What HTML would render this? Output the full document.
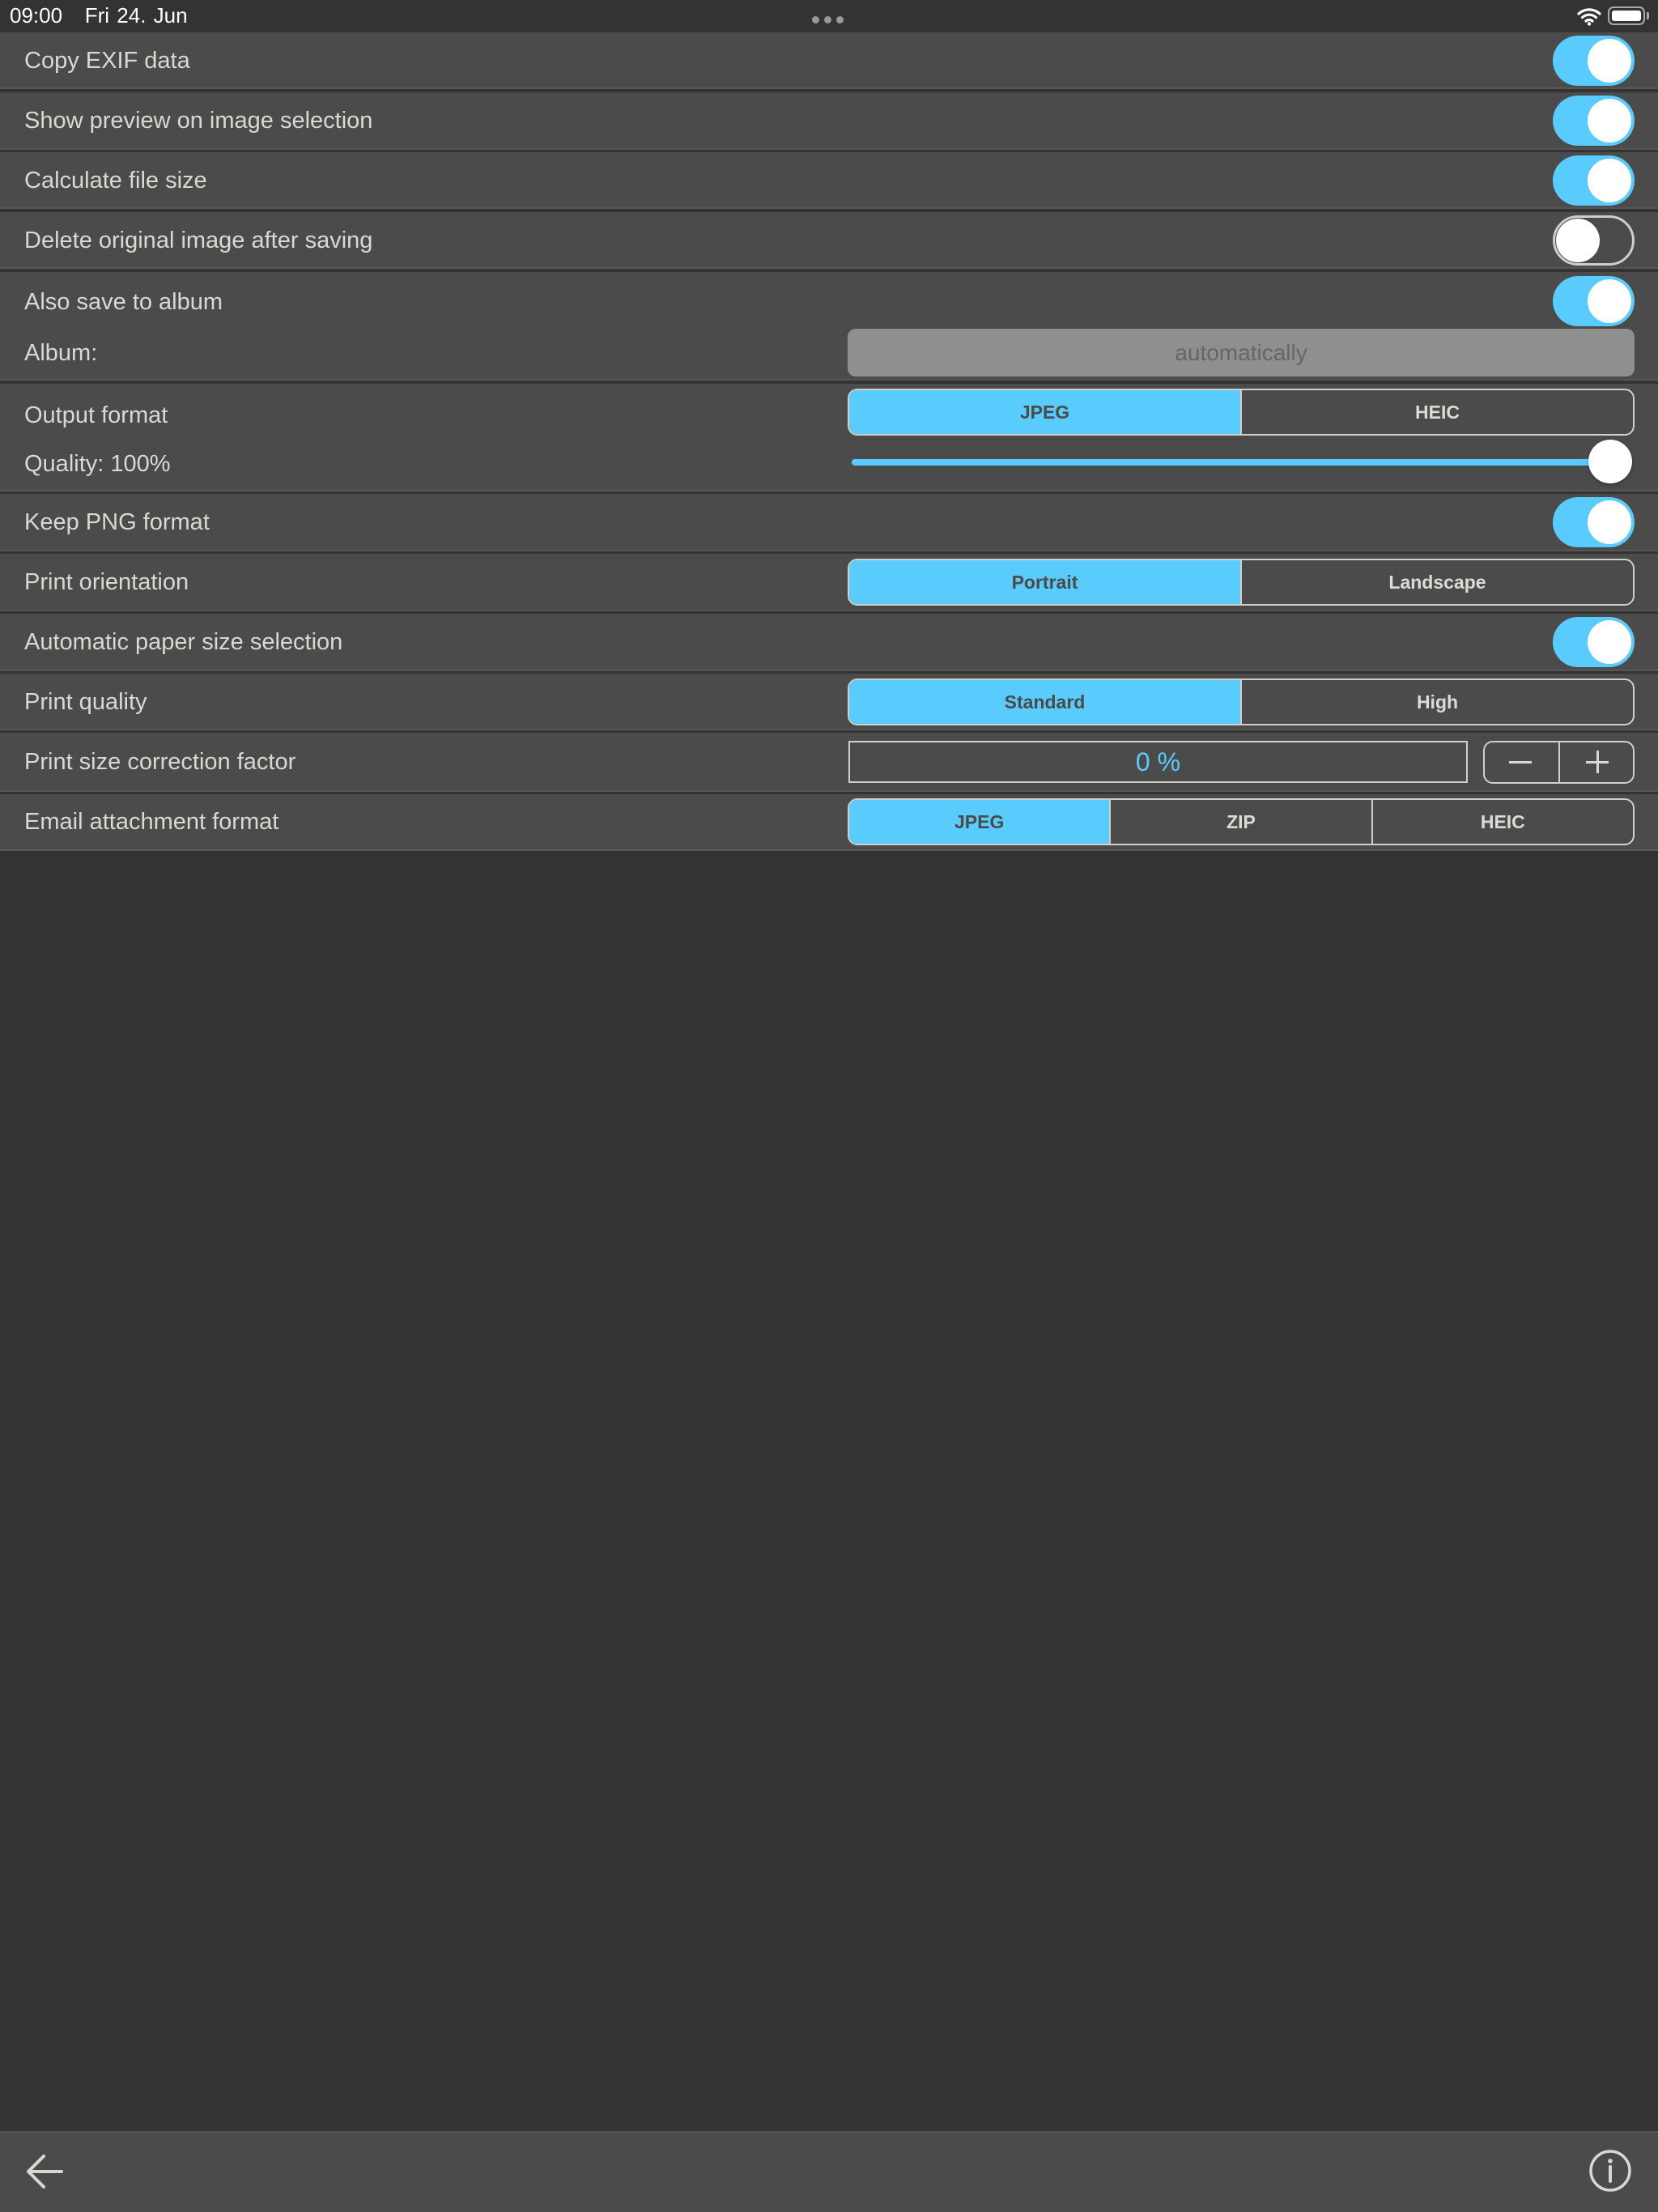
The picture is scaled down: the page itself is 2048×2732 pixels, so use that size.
<!DOCTYPE html>
<html><head><meta charset="utf-8"><style>
*{margin:0;padding:0;box-sizing:border-box}
body{width:2048px;height:2732px;background:#333333;position:relative;overflow:hidden;font-family:"Liberation Sans",sans-serif}
.a{position:absolute}
.row{position:absolute;left:0;width:2048px;background:#4b4b4b;border-bottom:2px solid #565656}
.lbl{position:absolute;left:30px;font-size:29px;color:#d9d9d2;line-height:32px;transform:translateY(-16px)}
.tg{position:absolute;left:1918px;width:101px;height:62px;border-radius:31px;background:#5acbfd}
.tg::after{content:"";position:absolute;right:4px;top:4px;width:54px;height:54px;border-radius:50%;background:#fff}
.tg.off{background:#4b4b4b;border:3px solid #cfcfc8}
.tg.off::after{left:1px;right:auto;top:1px}
.seg{position:absolute;left:1047px;width:972px;height:58px;border:2px solid #d0d0c8;border-radius:12px;overflow:hidden;display:flex}
.seg div{flex:1;display:flex;align-items:center;justify-content:center;font-size:23px;font-weight:bold;color:#dcdcd6}
.seg div+div{border-left:2px solid #d0d0c8}
.seg .on{background:#5acbfd;color:#4a4a4a}
</style></head><body>
<div class="a" style="left:12px;top:4px;font-size:26px;color:#fff;line-height:30px;word-spacing:2px">09:00&nbsp;&nbsp;&nbsp;Fri 24. Jun</div>
<div class="a" style="left:1003px;top:20px;width:9px;height:9px;border-radius:50%;background:#999;box-shadow:15px 0 #999,30px 0 #999"></div>
<svg class="a" style="left:1948px;top:8px" width="30" height="24" viewBox="0 0 30 24"><path d="M2 9a19 19 0 0 1 26 0M6.5 13.5a12.5 12.5 0 0 1 17 0M11 18a6 6 0 0 1 8 0" stroke="#fff" stroke-width="3.2" fill="none" stroke-linecap="round"/><circle cx="15" cy="21.5" r="2.2" fill="#fff"/></svg>
<div class="a" style="left:1986px;top:8px;width:46px;height:23px;border:2px solid #aaa;border-radius:7px;padding:3px"><div style="width:100%;height:100%;background:#fff;border-radius:3px"></div></div>
<div class="a" style="left:2034px;top:15px;width:3px;height:9px;background:#aaa;border-radius:0 2px 2px 0"></div>

<div class="row" style="top:40px;height:70px"></div>
<div class="row" style="top:114px;height:71px"></div>
<div class="row" style="top:188px;height:70px"></div>
<div class="row" style="top:262px;height:70px"></div>
<div class="row" style="top:336px;height:134px"></div>
<div class="row" style="top:474px;height:133px"></div>
<div class="row" style="top:610px;height:71px"></div>
<div class="row" style="top:684px;height:71px"></div>
<div class="row" style="top:758px;height:71px"></div>
<div class="row" style="top:832px;height:70px"></div>
<div class="row" style="top:905px;height:73px"></div>
<div class="row" style="top:981px;height:70px"></div>

<div class="lbl" style="top:75px">Copy EXIF data</div>
<div class="lbl" style="top:149px">Show preview on image selection</div>
<div class="lbl" style="top:223px">Calculate file size</div>
<div class="lbl" style="top:297px">Delete original image after saving</div>
<div class="lbl" style="top:373px">Also save to album</div>
<div class="lbl" style="top:436px">Album:</div>
<div class="lbl" style="top:513px">Output format</div>
<div class="lbl" style="top:573px">Quality: 100%</div>
<div class="lbl" style="top:645px">Keep PNG format</div>
<div class="lbl" style="top:719px">Print orientation</div>
<div class="lbl" style="top:793px">Automatic paper size selection</div>
<div class="lbl" style="top:867px">Print quality</div>
<div class="lbl" style="top:941px">Print size correction factor</div>
<div class="lbl" style="top:1015px">Email attachment format</div>

<div class="tg" style="top:44px"></div>
<div class="tg" style="top:118px"></div>
<div class="tg" style="top:192px"></div>
<div class="tg off" style="top:266px"></div>
<div class="tg" style="top:341px"></div>
<div class="tg" style="top:614px"></div>
<div class="tg" style="top:762px"></div>

<div class="a" style="left:1047px;top:406px;width:972px;height:59px;background:#8f8f8f;border-radius:10px;font-size:28px;color:#666;display:flex;align-items:center;justify-content:center">automatically</div>

<div class="seg" style="top:480px"><div class="on">JPEG</div><div>HEIC</div></div>
<div class="a" style="left:1052px;top:567px;width:940px;height:8px;border-radius:4px;background:#5acbfd"></div>
<div class="a" style="left:1962px;top:543px;width:54px;height:54px;border-radius:50%;background:#fff;box-shadow:0 2px 4px rgba(0,0,0,.3)"></div>

<div class="seg" style="top:690px"><div class="on">Portrait</div><div>Landscape</div></div>
<div class="seg" style="top:838px"><div class="on">Standard</div><div>High</div></div>

<div class="a" style="left:1048px;top:915px;width:765px;height:52px;border:2px solid #d0d0c8;font-size:32px;color:#5acbfd;display:flex;align-items:center;justify-content:center">0 %</div>
<div class="a" style="left:1832px;top:915px;width:187px;height:53px;border:2px solid #d0d0c8;border-radius:12px"></div>
<div class="a" style="left:1925px;top:915px;width:2px;height:53px;background:#d0d0c8"></div>
<div class="a" style="left:1864px;top:940px;width:28px;height:3px;background:#d8d8d2"></div>
<div class="a" style="left:1959px;top:940px;width:28px;height:3px;background:#d8d8d2"></div>
<div class="a" style="left:1972px;top:927px;width:3px;height:28px;background:#d8d8d2"></div>

<div class="seg" style="top:986px"><div class="on">JPEG</div><div>ZIP</div><div>HEIC</div></div>

<div class="a" style="left:0;top:2632px;width:2048px;height:100px;background:#4b4b4b;border-top:2px solid #555"></div>
<svg class="a" style="left:30px;top:2658px" width="50" height="48" viewBox="0 0 50 48"><path d="M46 24H6M24 5L5 24l19 19" stroke="#d8d8d0" stroke-width="4" fill="none" stroke-linecap="round" stroke-linejoin="round"/></svg>
<svg class="a" style="left:1962px;top:2654px" width="54" height="54" viewBox="0 0 54 54"><circle cx="27" cy="27" r="24" stroke="#d8d8d0" stroke-width="3.5" fill="none"/><circle cx="27" cy="15" r="2.8" fill="#d8d8d0"/><path d="M27 22v18" stroke="#d8d8d0" stroke-width="4" stroke-linecap="round"/></svg>
</body></html>
